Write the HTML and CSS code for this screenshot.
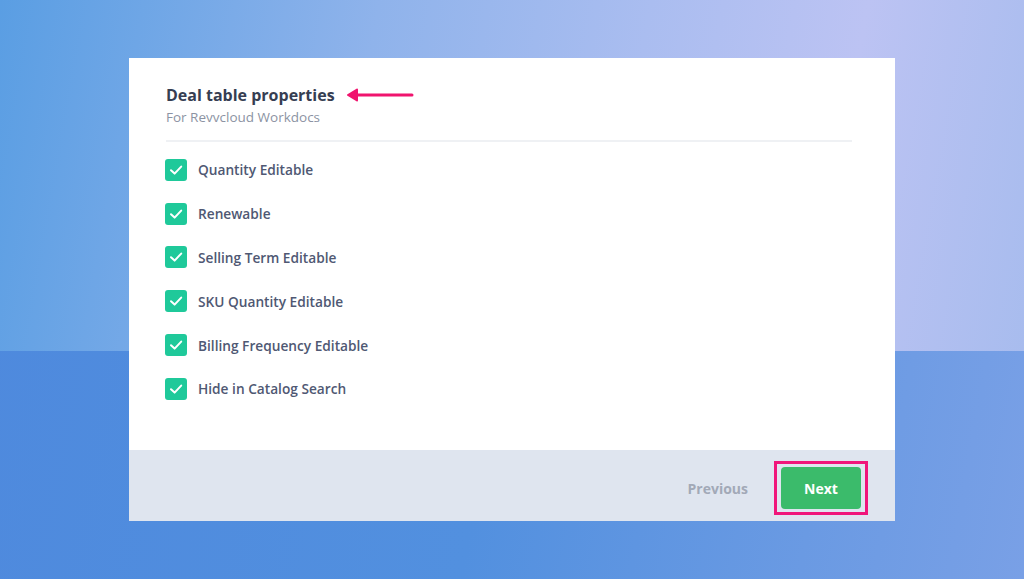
FILE: index.html
```html
<!DOCTYPE html>
<html>

<head>
    <meta charset="UTF-8" />
    <meta name="viewport" content="width=device-width, initial-scale=1.0">
    <title>Deal table properties</title>
    <link rel="stylesheet" href="styles.css">
</head>

<body>
    <!-- 卡片容器 -->
    <div class="card">
        <div class="card-body">
            <div class="title-row">
                <h1 class="title">Deal table properties</h1>
                <!-- 标注箭头 -->
                <svg class="arrow" width="68" height="14" viewBox="0 0 68 14">
                    <path d="M66 7 H8" stroke="#f0146e" stroke-width="3" stroke-linecap="round" />
                    <path d="M11 1.5 L2 7 L11 12.5 Z" fill="#f0146e" stroke="#f0146e" stroke-width="2" stroke-linejoin="round" />
                </svg>
            </div>
            <p class="subtitle">For Revvcloud Workdocs</p>
            <div class="divider"></div>

            <ul class="options">
                <li><span class="check"><svg width="22" height="22" viewBox="0 0 22 22"><path d="M6 11.2 L9.6 14.6 L16.2 7.6" fill="none" stroke="#fff" stroke-width="2" stroke-linecap="round" stroke-linejoin="round"/></svg></span>Quantity Editable</li>
                <li><span class="check"><svg width="22" height="22" viewBox="0 0 22 22"><path d="M6 11.2 L9.6 14.6 L16.2 7.6" fill="none" stroke="#fff" stroke-width="2" stroke-linecap="round" stroke-linejoin="round"/></svg></span>Renewable</li>
                <li><span class="check"><svg width="22" height="22" viewBox="0 0 22 22"><path d="M6 11.2 L9.6 14.6 L16.2 7.6" fill="none" stroke="#fff" stroke-width="2" stroke-linecap="round" stroke-linejoin="round"/></svg></span>Selling Term Editable</li>
                <li><span class="check"><svg width="22" height="22" viewBox="0 0 22 22"><path d="M6 11.2 L9.6 14.6 L16.2 7.6" fill="none" stroke="#fff" stroke-width="2" stroke-linecap="round" stroke-linejoin="round"/></svg></span>SKU Quantity Editable</li>
                <li><span class="check"><svg width="22" height="22" viewBox="0 0 22 22"><path d="M6 11.2 L9.6 14.6 L16.2 7.6" fill="none" stroke="#fff" stroke-width="2" stroke-linecap="round" stroke-linejoin="round"/></svg></span>Billing Frequency Editable</li>
                <li><span class="check"><svg width="22" height="22" viewBox="0 0 22 22"><path d="M6 11.2 L9.6 14.6 L16.2 7.6" fill="none" stroke="#fff" stroke-width="2" stroke-linecap="round" stroke-linejoin="round"/></svg></span>Hide in Catalog Search</li>
            </ul>
        </div>

        <!-- 底部按钮 -->
        <div class="card-footer">
            <a href="javascript:;" class="btn-prev">Previous</a>
            <div class="highlight">
                <a href="javascript:;" class="btn-next">Next</a>
            </div>
        </div>
    </div>
</body>

</html>
```

FILE: styles.css
```css
* {
    margin: 0px;
    padding: 0px;
}

html,
body {
    width: 100%;
    height: 100%;
    overflow: hidden;
}

/* 背景：上下两段渐变 */
body {
    font-family: "Open Sans", Lato, sans-serif;
    background:
        linear-gradient(100deg, #5a9ee3 0%, #8fb3eb 35%, #aabdf0 60%, #bcc3f3 80%, #a8bcee 100%) top left / 100% 351px no-repeat,
        linear-gradient(100deg, #4e89dd 0%, #5290df 50%, #6a9ae3 80%, #79a0e6 100%);
    padding: 58px 0 0 129px;
    box-sizing: border-box;
}

/* 卡片 */
.card {
    width: 766px;
    height: 463px;
    background-color: #ffffff;
    display: flex;
    flex-direction: column;
}

.card-body {
    flex: 1;
    padding: 26px 43px 0 37px;
}

.title-row {
    display: flex;
    align-items: center;
    gap: 11px;
}

.title {
    font-size: 16px;
    line-height: 22px;
    font-weight: 700;
    color: #363e52;
}

.subtitle {
    font-size: 13.5px;
    line-height: 18px;
    color: #8c93a3;
    margin-top: 2px;
}

.divider {
    height: 2px;
    background-color: #eff1f4;
    margin-top: 14px;
}

/* 选项列表 */
.options {
    list-style: none;
    margin-top: 6px;
}

.options li {
    height: 43.8px;
    display: flex;
    align-items: center;
    font-size: 13.7px;
    font-weight: 600;
    color: #4f5873;
}

.check {
    width: 22px;
    height: 22px;
    border-radius: 3px;
    background-color: #1fc99a;
    margin: 0 11px 0 -1px;
    display: flex;
}

/* 底部 */
.card-footer {
    height: 71px;
    background-color: #dfe5ef;
    display: flex;
    justify-content: flex-end;
    align-items: center;
    padding: 5px 27px 0 0;
    box-sizing: border-box;
}

.btn-prev {
    font-size: 14px;
    font-weight: 700;
    color: #a2a9b7;
    text-decoration: none;
    margin-right: 26px;
}

.highlight {
    width: 94px;
    height: 54px;
    border: 3px solid #f0167a;
    box-sizing: border-box;
    display: flex;
    align-items: center;
    justify-content: center;
}

.btn-next {
    width: 80px;
    height: 42px;
    border-radius: 4px;
    background-color: #3bbb6b;
    color: #ffffff;
    font-size: 14px;
    font-weight: 700;
    text-decoration: none;
    display: flex;
    align-items: center;
    justify-content: center;
}
```
